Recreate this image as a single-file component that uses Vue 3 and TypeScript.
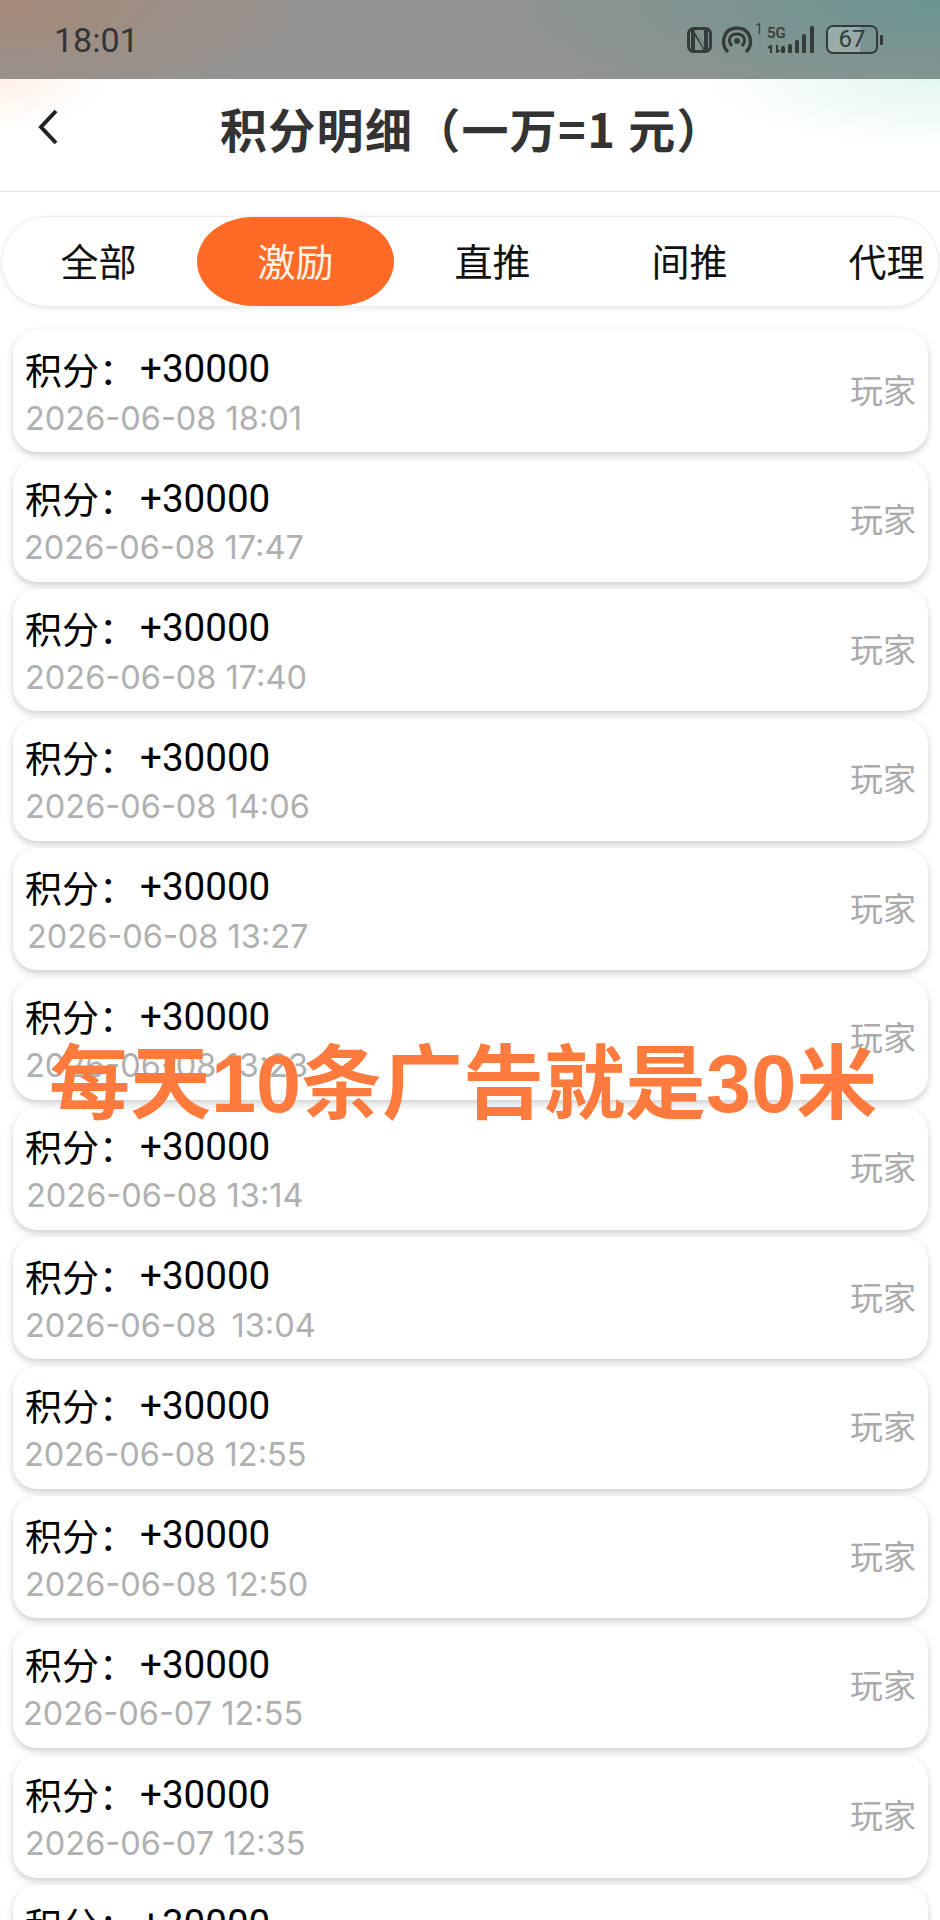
<script setup lang="ts">
const tabs = ['全部', '激励', '直推', '间推', '代理']
const activeTab = 1

const records = [
  { time: '2026-06-08 18:01', nudge: 0 },
  { time: '2026-06-08 17:47', nudge: -1 },
  { time: '2026-06-08 17:40', nudge: 0 },
  { time: '2026-06-08 14:06', nudge: 0 },
  { time: '2026-06-08 13:27', nudge: 2 },
  { time: '2026-06-08 13:23', nudge: 0 },
  { time: '2026-06-08 13:14', nudge: 1 },
  { time: '2026-06-08\u2009 13:04', nudge: 0 },
  { time: '2026-06-08 12:55', nudge: -1 },
  { time: '2026-06-08 12:50', nudge: 0 },
  { time: '2026-06-07 12:55', nudge: -2 },
  { time: '2026-06-07 12:35', nudge: 0 },
  { time: '2026-06-07 12:30', nudge: 0 },
]
</script>

<template>
  <div class="screen">
    <div class="status-bar">
      <span class="clock">18:01</span>
      <div class="status-icons">
        <svg class="nfc" width="25" height="26" viewBox="0 0 25 26">
          <rect x="1.5" y="1.5" width="22" height="23" rx="5" fill="none" stroke="#333b3b" stroke-width="3" />
          <path d="M4 2v22h4V9l9 15h4V2h-4v15L8 2z" fill="#333b3b" />
          <path d="M8 3.5 17 20" fill="none" stroke="#8c9694" stroke-width="1.6" />
        </svg>
        <svg class="hotspot" width="32" height="27" viewBox="0 0 32 27">
          <path d="M7 26C-1 18 2 2 16 2s17 16 9 24" fill="none" stroke="#333b3b" stroke-width="3.4" />
          <path d="M11 20C6 14 9 8 16 8s10 6 5 12" fill="none" stroke="#333b3b" stroke-width="3" />
          <circle cx="16" cy="15" r="3" fill="#333b3b" />
        </svg>
        <span class="sim">1</span>
        <div class="network">
          <span class="net-label">5G</span>
          <svg class="net-arrows" width="14" height="8" viewBox="0 0 14 8">
            <path d="M4 8V1L1 3M10 0v7l3-2" fill="none" stroke="#333b3b" stroke-width="2" />
          </svg>
        </div>
        <svg class="signal" width="34" height="27" viewBox="0 0 34 27">
          <rect x="0" y="20" width="4" height="7" rx="1.5" fill="#333b3b" />
          <rect x="7" y="18" width="4" height="9" rx="1.5" fill="#333b3b" />
          <rect x="14" y="14" width="4" height="13" rx="1.5" fill="#333b3b" />
          <rect x="21" y="8" width="4" height="19" rx="1.5" fill="#333b3b" />
          <rect x="29" y="0" width="4" height="27" rx="1.5" fill="#333b3b" />
        </svg>
        <div class="battery">
          <span class="battery-fill"></span>
          <span class="battery-num">67</span>
        </div>
        <span class="battery-cap"></span>
      </div>
    </div>

    <div class="nav">
      <svg class="back" width="22" height="36" viewBox="0 0 22 36">
        <path d="M19 2 4 18l15 16" fill="none" stroke="#222" stroke-width="4" />
      </svg>
      <h1 class="title">积分明细（一万=1 元）</h1>
    </div>

    <div class="tabs">
      <div
        v-for="(tab, i) in tabs"
        :key="tab"
        class="tab"
        :class="{ active: i === activeTab }"
      >
        <span class="tab-text">{{ tab }}</span>
      </div>
    </div>

    <div class="list">
      <div v-for="row in records" :key="row.time" class="card">
        <div class="card-main">
          <div class="points"><span class="points-label">积分：</span><span class="points-value">+30000</span></div>
          <div class="time" :style="{ marginLeft: row.nudge + 'px' }">{{ row.time }}</div>
        </div>
        <span class="role">玩家</span>
      </div>
    </div>

    <div class="promo">每天10条广告就是30米</div>
  </div>
</template>

<style>
html,
body {
  margin: 0;
  background: #fff;
}
</style>

<style scoped>
.screen {
  position: relative;
  width: 940px;
  height: 1920px;
  overflow: hidden;
  background: #fff;
  font-family: 'Noto Sans CJK SC', sans-serif;
}

.status-bar {
  height: 79px;
  display: flex;
  align-items: center;
  justify-content: space-between;
  padding: 0 57px 0 54px;
  background:
    radial-gradient(ellipse 320px 110px at 0 0, #a68a78 0%, rgba(146, 146, 146, 0) 100%),
    radial-gradient(ellipse 460px 130px at 100% 0, #6b9590 0%, rgba(146, 146, 146, 0) 100%),
    #939392;
}

.clock {
  font-family: Roboto, sans-serif;
  font-size: 34px;
  color: #343434;
}

.status-icons {
  display: flex;
  align-items: center;
}

.hotspot {
  margin-left: 9px;
}

.sim {
  align-self: flex-start;
  margin: -4px 0 0 2px;
  width: 9px;
  font-family: Roboto, sans-serif;
  font-size: 14px;
  line-height: 16px;
  color: #333b3b;
}

.network {
  display: flex;
  flex-direction: column;
  gap: 4px;
  margin-left: 3px;
  width: 18px;
}

.net-label {
  font-family: Roboto, sans-serif;
  font-size: 15px;
  line-height: 15px;
  font-weight: 500;
  color: #333b3b;
}

.signal {
  margin-left: -4px;
}

.battery {
  position: relative;
  box-sizing: border-box;
  width: 52px;
  height: 29px;
  margin-left: 11px;
  border: 2.5px solid #333b3b;
  border-radius: 7px;
  overflow: hidden;
}

.battery-fill {
  position: absolute;
  left: 0;
  top: 0;
  bottom: 0;
  width: 67%;
  background: rgba(255, 255, 255, 0.22);
}

.battery-num {
  position: relative;
  display: block;
  text-align: center;
  font-family: Roboto, sans-serif;
  font-size: 24px;
  line-height: 24px;
  color: #333b3b;
}

.battery-cap {
  width: 3px;
  height: 10px;
  margin-left: 2px;
  border-radius: 1px;
  background: #333b3b;
}

.nav {
  box-sizing: border-box;
  height: 113px;
  display: flex;
  align-items: center;
  padding: 0 0 14px 37px;
  border-bottom: 1px solid #e6e6e6;
  background:
    radial-gradient(ellipse 110px 50px at 0 0, #fff0e6 0%, rgba(255, 255, 255, 0) 100%),
    radial-gradient(ellipse 240px 70px at 100% 0, #e2f6f2 0%, rgba(255, 255, 255, 0) 100%),
    #fff;
}

.back {
  margin-bottom: 2px;
}

.title {
  margin: 0 0 0 161px;
  font-size: 47px;
  line-height: 60px;
  letter-spacing: 1.3px;
  font-weight: 700;
  color: #333;
  white-space: nowrap;
}

.tabs {
  box-sizing: border-box;
  height: 91px;
  margin: 24px 1px 0;
  display: flex;
  overflow: hidden;
  border: 1px solid #eee;
  border-radius: 46px;
  box-shadow: 0 2px 5px rgba(0, 0, 0, 0.08);
  background: #fff;
}

.tab {
  flex: 0 0 197px;
  display: flex;
  align-items: center;
  justify-content: center;
  font-size: 38px;
  color: #111;
}

.tab:first-child {
  margin-left: -2px;
}

.tab-text {
  margin-bottom: 5px;
}

.tab.active {
  color: #fff3e8;
  background: #ff6b26;
  border-radius: 58px / 46px;
}

.list {
  display: flex;
  flex-direction: column;
  gap: 7.6px;
  padding: 23px 12px 0 13px;
}

.card {
  flex: none;
  box-sizing: border-box;
  height: 122px;
  display: flex;
  align-items: center;
  justify-content: space-between;
  padding: 0 12px;
  border-radius: 24px;
  background: #fff;
  box-shadow: 0 3px 7px rgba(0, 0, 0, 0.2);
}

.card-main {
  display: flex;
  flex-direction: column;
  padding-top: 5px;
}

.points {
  display: flex;
  height: 50px;
  align-items: center;
  font-size: 37px;
  color: #000;
}

.points-value {
  margin-left: 4px;
  font-family: Roboto, sans-serif;
  font-size: 38.6px;
}

.time {
  height: 50px;
  line-height: 50px;
  font-family: Inter, Roboto, sans-serif;
  font-size: 32.5px;
  color: #b0b0b0;
  white-space: pre;
}

.role {
  margin-bottom: 5px;
  font-size: 33px;
  color: #aaa;
}

.promo {
  position: absolute;
  left: 49px;
  top: 1034px;
  font-family: 'Liberation Sans', 'Noto Sans CJK SC', sans-serif;
  font-size: 81px;
  line-height: 100px;
  font-weight: 700;
  color: #ff7a3d;
  white-space: nowrap;
}
</style>
